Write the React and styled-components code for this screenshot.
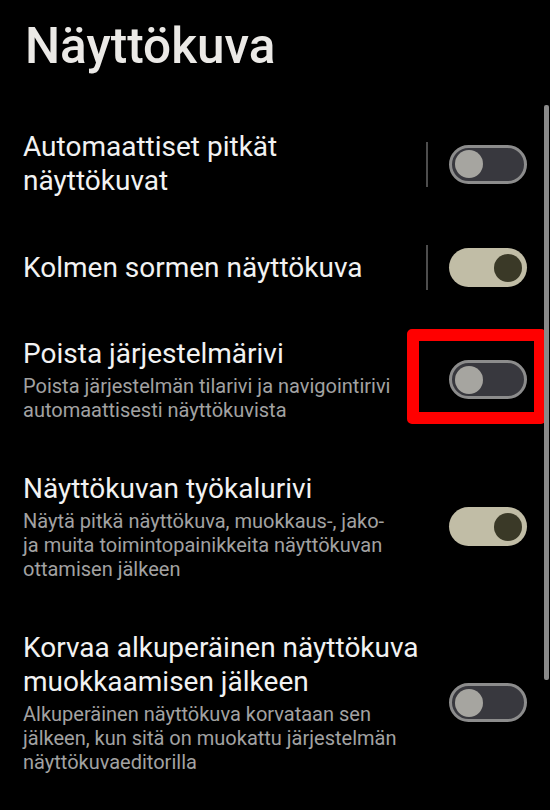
import React from "react";
import styled, { createGlobalStyle } from "styled-components";

const Global = createGlobalStyle`
  html, body { margin: 0; padding: 0; background: #000; }
  body { font-family: Roboto, "Noto Sans", "Liberation Sans", sans-serif; }
  * { box-sizing: border-box; }
`;

const Page = styled.div`
  position: relative;
  width: 550px;
  height: 810px;
  overflow: hidden;
  background: #000;
`;

const Heading = styled.h1`
  margin: 0;
  padding: 22px 23px 0 25px;
  font-size: 49.5px;
  line-height: 49px;
  font-weight: 500;
  color: #ebe9e6;
`;

const List = styled.div`
  margin-top: 34px;
  display: flex;
  flex-direction: column;
`;

const Row = styled.div`
  display: flex;
  align-items: center;
  padding: 25px 23px 25px 23px;
`;

const TextCol = styled.div`
  flex: 1;
  min-width: 0;
  padding-right: 2px;
`;

const Title = styled.div`
  font-size: 28px;
  line-height: 34px;
  color: #f2f2f2;
`;

const Sub = styled.div`
  margin-top: 3px;
  max-width: 378px;
  font-size: 20px;
  line-height: 24px;
  color: #a2a2a2;
`;

const Divider = styled.div`
  width: 2px;
  height: 45px;
  margin: -6px 21px -6px 0;
  background: ${(p) => (p.$visible ? "#4d4d4d" : "transparent")};
  flex-shrink: 0;
`;

const SwitchWrap = styled.div`
  position: relative;
  flex-shrink: 0;
`;

const Track = styled.div`
  width: 78px;
  height: 39px;
  border-radius: 20px;
  display: flex;
  align-items: center;
  justify-content: ${(p) => (p.$on ? "flex-end" : "flex-start")};
  padding: ${(p) => (p.$on ? "0 5px" : "0 3px")};
  background: ${(p) => (p.$on ? "#c1bda6" : "#38383e")};
  border: ${(p) => (p.$on ? "none" : "3px solid #8c8c8c")};
`;

const Knob = styled.div`
  width: 28px;
  height: 28px;
  border-radius: 50%;
  background: ${(p) => (p.$on ? "#3a3927" : "#a6a5a0")};
`;

const Highlight = styled.div`
  position: absolute;
  top: -31px;
  left: -42px;
  right: -19px;
  bottom: -25px;
  border: 12px solid #ff0000;
  border-radius: 5px;
  pointer-events: none;
`;

const Scrollbar = styled.div`
  position: absolute;
  top: 105px;
  right: 1px;
  width: 5px;
  height: 575px;
  border-radius: 2px;
  background: #8a8a8a;
`;

const items = [
  { title: "Automaattiset pitkät näyttökuvat", on: false, divider: true },
  { title: "Kolmen sormen näyttökuva", on: true, divider: true },
  {
    title: "Poista järjestelmärivi",
    sub: "Poista järjestelmän tilarivi ja navigointirivi automaattisesti näyttökuvista",
    on: false,
    highlight: true,
  },
  {
    title: "Näyttökuvan työkalurivi",
    sub: "Näytä pitkä näyttökuva, muokkaus-, jako- ja muita toimintopainikkeita näyttökuvan ottamisen jälkeen",
    on: true,
  },
  {
    title: "Korvaa alkuperäinen näyttökuva muokkaamisen jälkeen",
    sub: "Alkuperäinen näyttökuva korvataan sen jälkeen, kun sitä on muokattu järjestelmän näyttökuvaeditorilla",
    on: false,
  },
];

function Switch({ on, highlight }) {
  return (
    <SwitchWrap>
      <Track $on={on}>
        <Knob $on={on} />
      </Track>
      {highlight && <Highlight />}
    </SwitchWrap>
  );
}

export default function App() {
  return (
    <Page>
      <Global />
      <Heading>Näyttökuva</Heading>
      <List>
        {items.map((it) => (
          <Row key={it.title}>
            <TextCol>
              <Title>{it.title}</Title>
              {it.sub && <Sub>{it.sub}</Sub>}
            </TextCol>
            <Divider $visible={it.divider} />
            <Switch on={it.on} highlight={it.highlight} />
          </Row>
        ))}
      </List>
      <Scrollbar />
    </Page>
  );
}
